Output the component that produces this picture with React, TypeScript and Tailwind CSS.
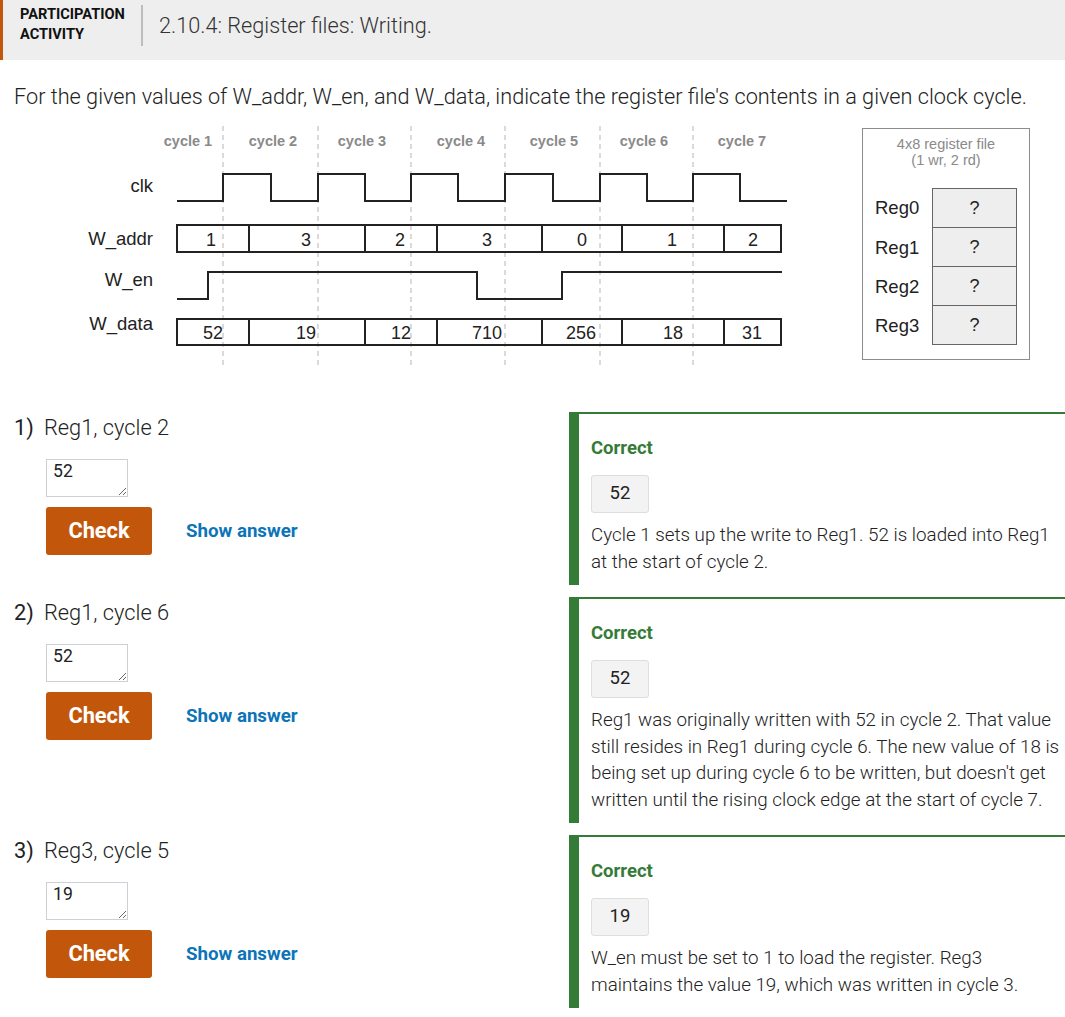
const cycleLines = [223, 318, 411, 505, 600, 693]

const cycles = [
  { label: 'cycle 1', x: 188 },
  { label: 'cycle 2', x: 273 },
  { label: 'cycle 3', x: 362 },
  { label: 'cycle 4', x: 461 },
  { label: 'cycle 5', x: 554 },
  { label: 'cycle 6', x: 644 },
  { label: 'cycle 7', x: 742 },
]

const dividers = [249, 365, 437, 542, 622, 724]

const addrVals = [
  { v: '1', x: 216 },
  { v: '3', x: 311 },
  { v: '2', x: 405 },
  { v: '3', x: 492 },
  { v: '0', x: 587 },
  { v: '1', x: 677 },
  { v: '2', x: 758 },
]

const dataVals = [
  { v: '52', x: 223 },
  { v: '19', x: 316 },
  { v: '12', x: 411 },
  { v: '710', x: 502 },
  { v: '256', x: 596 },
  { v: '18', x: 683 },
  { v: '31', x: 762 },
]

const TimingDiagram = () => {
  return (
    <svg width="800" height="240" viewBox="0 0 800 240" className="shrink-0">
      <g fontFamily="'Liberation Sans', Arial, sans-serif">
        {cycleLines.map((x) => (
          <line key={x} x1={x} y1={0} x2={x} y2={240} stroke="#b5b5b5" strokeWidth="1" strokeDasharray="5 4" />
        ))}
        {cycles.map((c) => (
          <text key={c.label} x={c.x} y={19.5} textAnchor="middle" fontSize="14.5" fontWeight="bold" fill="#8a8a8a">
            {c.label}
          </text>
        ))}

        <text x={153} y={66} textAnchor="end" fontSize="18.5" fill="#222">clk</text>
        <text x={153} y={119} textAnchor="end" fontSize="18.5" fill="#222">W_addr</text>
        <text x={153} y={160} textAnchor="end" fontSize="18.5" fill="#222">W_en</text>
        <text x={153} y={204} textAnchor="end" fontSize="18.5" fill="#222">W_data</text>

        <path
          d="M177 75 H223 V48 H271 V75 H318 V48 H365 V75 H411 V48 H458 V75 H505 V48 H553 V75 H600 V48 H647 V75 H693 V48 H740 V75 H787"
          fill="none"
          stroke="#222"
          strokeWidth="2"
        />

        <rect x={177} y={99} width={604} height={27} fill="none" stroke="#222" strokeWidth="2" />
        {dividers.map((x) => (
          <line key={'a' + x} x1={x} y1={99} x2={x} y2={126} stroke="#222" strokeWidth="2" />
        ))}
        {addrVals.map((d, i) => (
          <text key={'av' + i} x={d.x} y={119.5} textAnchor="end" fontSize="18" fill="#222">
            {d.v}
          </text>
        ))}

        <path d="M177 173 H208 V146 H477 V173 H562 V146 H782" fill="none" stroke="#222" strokeWidth="2" />

        <rect x={177} y={193} width={604} height={26} fill="none" stroke="#222" strokeWidth="2" />
        {dividers.map((x) => (
          <line key={'d' + x} x1={x} y1={193} x2={x} y2={219} stroke="#222" strokeWidth="2" />
        ))}
        {dataVals.map((d, i) => (
          <text key={'dv' + i} x={d.x} y={212.5} textAnchor="end" fontSize="18" fill="#222">
            {d.v}
          </text>
        ))}
      </g>
    </svg>
  )
}

const RegisterFile = () => {
  return (
    <div className="ml-[62px] mt-[2px] w-[168px] h-[232px] border border-[#8c8c8c] font-['Liberation_Sans',Arial,sans-serif]">
      <div className="pt-[7px] text-center text-[14.5px] leading-[16px] text-[#8a8a8a]">
        <div>4x8 register file</div>
        <div>(1 wr, 2 rd)</div>
      </div>
      <div className="mt-[20px]">
        {['Reg0', 'Reg1', 'Reg2', 'Reg3'].map((r, i) => (
          <div key={r} className="flex items-stretch">
            <div className="w-[69px] pl-[12px] flex items-center text-[18.5px] text-[#222]">{r}</div>
            <div
              className={
                'w-[85px] h-[40px] flex items-center justify-center bg-[#eeeeee] border border-[#666] text-[18px] text-[#222] ' +
                (i === 0 ? '' : '-mt-px')
              }
            >
              ?
            </div>
          </div>
        ))}
      </div>
    </div>
  )
}

type Q = {
  num: string
  title: string
  value: string
  answer: string
  explanation: string
}

const questions: Q[] = [
  {
    num: '1)',
    title: 'Reg1, cycle 2',
    value: '52',
    answer: '52',
    explanation: 'Cycle 1 sets up the write to Reg1. 52 is loaded into Reg1 at the start of cycle 2.',
  },
  {
    num: '2)',
    title: 'Reg1, cycle 6',
    value: '52',
    answer: '52',
    explanation:
      "Reg1 was originally written with 52 in cycle 2. That value still resides in Reg1 during cycle 6. The new value of 18 is being set up during cycle 6 to be written, but doesn't get written until the rising clock edge at the start of cycle 7.",
  },
  {
    num: '3)',
    title: 'Reg3, cycle 5',
    value: '19',
    answer: '19',
    explanation: 'W_en must be set to 1 to load the register. Reg3 maintains the value 19, which was written in cycle 3.',
  },
]

const Question = ({ q }: { q: Q }) => {
  return (
    <div className="flex items-start">
      <div className="w-[569px] shrink-0 pl-[14px]">
        <div className="flex pt-[1px] text-[21.8px] leading-[30px] text-[#222]">
          <span className="w-[30px] font-normal">{q.num}</span>
          <span className="font-light">{q.title}</span>
        </div>
        <div className="ml-[32px] mt-[16px]">
          <textarea
            defaultValue={q.value}
            className="block w-[82px] h-[38px] border border-[#ccd1d6] px-[6px] py-[1px] text-[17.6px] leading-[20px] text-[#222] outline-none"
          />
          <div className="mt-[10px] flex items-center">
            <button className="w-[106px] h-[48px] rounded-[3px] bg-[#c2570c] text-white text-[21.8px] font-bold">
              Check
            </button>
            <a href="#" className="ml-[34px] text-[18.7px] font-bold text-[#0c74b8]">
              Show answer
            </a>
          </div>
        </div>
      </div>
      <div className="flex-1 border-t-2 border-l-[10px] border-[#357b38] pl-[12px] pr-[2px] pt-[22px] pb-[10px]">
        <div className="text-[18.5px] leading-[24px] font-bold text-[#357b38]">Correct</div>
        <div className="mt-[15px] w-[58px] h-[38px] flex items-center justify-center rounded-[3px] border border-[#dedede] bg-[#f3f3f3] text-[18.5px] text-[#222]">
          {q.answer}
        </div>
        <p className="mt-[9px] text-[18.8px] leading-[26.5px] font-light text-[#222]">{q.explanation}</p>
      </div>
    </div>
  )
}

const App = () => {
  return (
    <div className="w-[1065px] min-h-[1017px] bg-white font-['Roboto',sans-serif] overflow-hidden">
      <header className="h-[60px] bg-[#eeeeee] border-l-[3px] border-[#c2570c] flex items-start">
        <div className="pl-[17px] pt-[4px] text-[14.6px] leading-[20px] font-bold uppercase text-[#111]">
          <div>Participation</div>
          <div>Activity</div>
        </div>
        <div className="ml-[16px] mt-[5px] w-[2px] h-[41px] bg-[#bdbdbd]" />
        <h1 className="ml-[16px] mt-[12px] text-[21.7px] leading-[28px] font-light text-[#333]">
          2.10.4: Register files: Writing.
        </h1>
      </header>

      <p className="mt-[23px] pl-[14px] text-[21.7px] leading-[28px] font-light text-[#222]">
        For the given values of W_addr, W_en, and W_data, indicate the register file's contents in a given clock cycle.
      </p>

      <div className="mt-[15px] flex items-start">
        <TimingDiagram />
        <RegisterFile />
      </div>

      <div className="mt-[46px] flex flex-col gap-[12px]">
        {questions.map((q) => (
          <Question key={q.num} q={q} />
        ))}
      </div>
    </div>
  )
}

export default App
